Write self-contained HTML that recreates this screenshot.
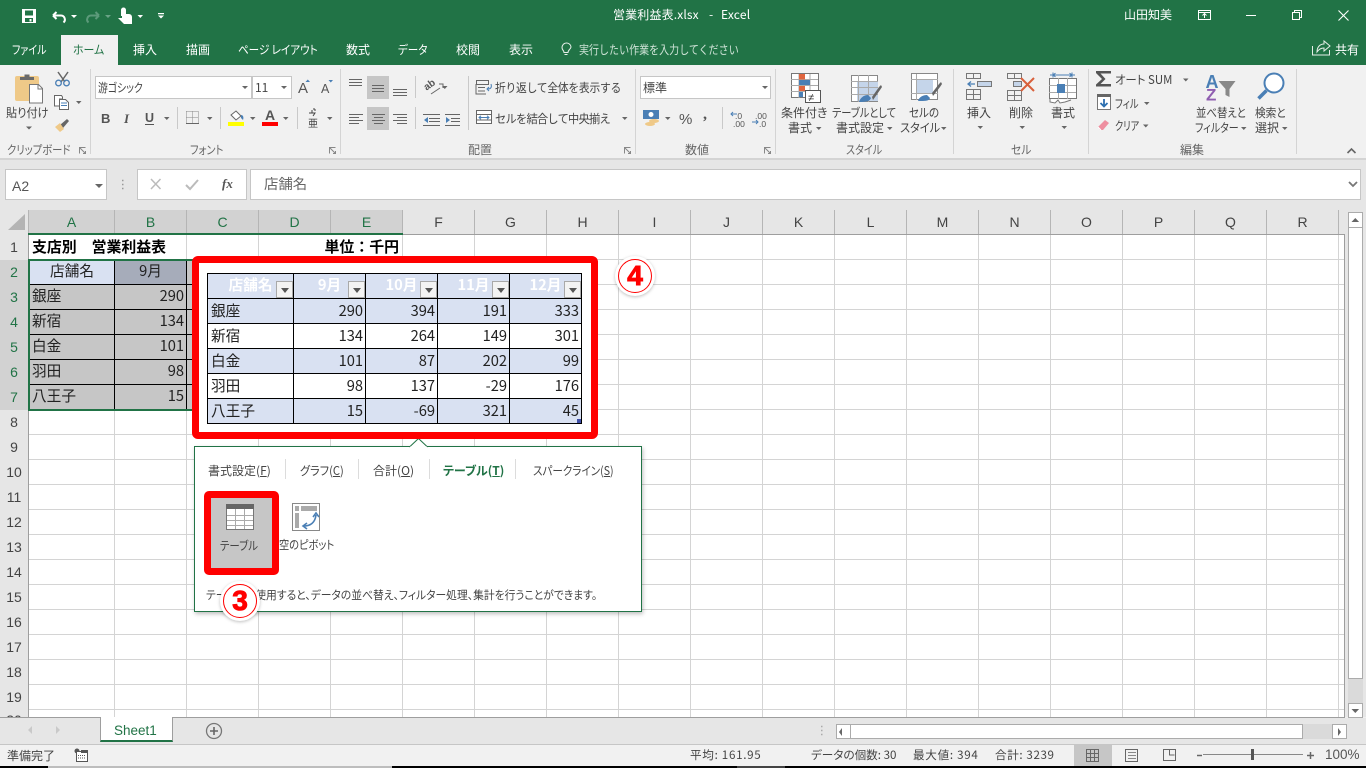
<!DOCTYPE html>
<html lang="ja"><head><meta charset="utf-8"><title>営業利益表.xlsx - Excel</title>
<style>
html,body{margin:0;padding:0;width:1366px;height:768px;overflow:hidden;background:#f1f1f1}
*{box-sizing:border-box}
body{position:relative;font-family:"Liberation Sans","Noto Sans CJK JP",sans-serif}
.a{position:absolute}
.t{position:absolute;white-space:nowrap;font:12px/16px "Noto Sans CJK JP",sans-serif;color:#444;font-feature-settings:"palt";transform-origin:0 50%}
.w{color:#fff}
.g{color:#666}
.c{position:absolute;white-space:nowrap;font:14.67px/24px "Noto Sans CJK JP",sans-serif;color:#222}
.h{position:absolute;text-align:center;font:14px/24px "Liberation Sans","Noto Sans CJK JP",sans-serif;color:#444}
.r{text-align:right}
.box{position:absolute;background:#fff;border:1px solid #c6c6c6}
table{position:absolute;border-collapse:collapse;table-layout:fixed;background:#fff}
td{border:1px solid #000;height:25px;padding:0 2px 0 3px;font:14.67px/22px "Noto Sans CJK JP",sans-serif;color:#222;overflow:hidden;white-space:nowrap;position:relative}
td.n{text-align:right}
tr.s td{background:#d9e1f2}
tr.hd td{background:#d9e1f2;color:#fff;font-weight:bold;text-align:center;padding:0 0 2px 0}
.f{position:absolute;right:0;bottom:0;width:17px;height:17px;background:#f3f3f3;border:1px solid #a9a9a9}
.f:after{content:"";position:absolute;left:4px;top:6px;border:4px solid transparent;border-top:5px solid #555;border-bottom:0}
u{text-underline-offset:1px}
</style></head><body>

<!-- title + tabs -->
<div class="a" style="left:0;top:0;width:1366px;height:65px;background:#217346"></div>
<div class="a" style="left:61px;top:35px;width:57px;height:30px;background:#f1f1f1"></div>
<div class="t w" style="left:613px;top:7px;letter-spacing:.15px">営業利益表.xlsx</div>
<div class="t w" style="left:709px;top:7px">-</div>
<div class="t w" style="left:721px;top:7px;letter-spacing:.2px">Excel</div>
<div class="t w" style="left:1124px;top:7px">山田知美</div>
<div class="t w" style="left:12px;top:42px;transform:scaleX(.83)">ファイル</div>
<div class="t" style="left:73px;top:42px;color:#217346;transform:scaleX(.91)">ホーム</div>
<div class="t w" style="left:133px;top:42px">挿入</div>
<div class="t w" style="left:186px;top:42px">描画</div>
<div class="t w" style="left:238px;top:42px;transform:scaleX(.88)">ページ レイアウト</div>
<div class="t w" style="left:346px;top:42px">数式</div>
<div class="t w" style="left:398px;top:42px;transform:scaleX(.88)">データ</div>
<div class="t w" style="left:456px;top:42px">校閲</div>
<div class="t w" style="left:509px;top:42px">表示</div>
<div class="t" style="left:579px;top:42px;color:#cfe3d7;font-feature-settings:normal;transform:scaleX(.835)">実行したい作業を入力してください</div>
<div class="t w" style="left:1335px;top:42px">共有</div>

<!-- ribbon -->
<div class="a" style="left:0;top:65px;width:1366px;height:93px;background:#f1f1f1"></div>
<div class="a" style="left:0;top:158px;width:1366px;height:2px;background:#d4d4d4"></div>
<div class="a" style="left:0;top:160px;width:1366px;height:50px;background:#e6e6e6"></div>

<div class="box" style="left:95px;top:76px;width:157px;height:23px"></div>
<div class="box" style="left:252px;top:76px;width:40px;height:23px"></div>
<div class="box" style="left:640px;top:76px;width:131px;height:23px"></div>
<div class="a" style="left:367px;top:76px;width:22px;height:23px;background:#c6c6c6"></div>
<div class="a" style="left:367px;top:107px;width:22px;height:23px;background:#c6c6c6"></div>

<div class="t" style="left:98px;top:80px;transform:scaleX(.82)">游ゴシック</div>
<div class="t" style="left:255px;top:80px">11</div>
<div class="t" style="left:643px;top:80px">標準</div>
<div class="t" style="left:6px;top:105px;transform:scaleX(.93)">貼り付け</div>
<div class="t" style="left:495px;top:80px;font-feature-settings:normal;letter-spacing:-.3px;transform:scaleX(.9)">折り返して全体を表示する</div>
<div class="t" style="left:495px;top:111px;font-feature-settings:normal;letter-spacing:-.8px;transform:scaleX(.936)">セルを結合して中央揃え</div>
<div class="t" style="left:781px;top:105px">条件付き</div>
<div class="t" style="left:788px;top:120px">書式</div>
<div class="t" style="left:832px;top:105px;transform:scaleX(.853)">テーブルとして</div>
<div class="t" style="left:836px;top:120px">書式設定</div>
<div class="t" style="left:909px;top:105px;transform:scaleX(.88)">セルの</div>
<div class="t" style="left:900px;top:120px;transform:scaleX(.93)">スタイル</div>
<div class="t" style="left:967px;top:105px">挿入</div>
<div class="t" style="left:1009px;top:105px">削除</div>
<div class="t" style="left:1051px;top:105px">書式</div>
<div class="t" style="left:1115px;top:72px;transform:scaleX(.95)">オート SUM</div>
<div class="t" style="left:1115px;top:96px;transform:scaleX(.78)">フィル</div>
<div class="t" style="left:1115px;top:118px;transform:scaleX(.76)">クリア</div>
<div class="t" style="left:1196px;top:105px;transform:scaleX(.864)">並べ替えと</div>
<div class="t" style="left:1195px;top:120px;transform:scaleX(.83)">フィルター</div>
<div class="t" style="left:1255px;top:105px;transform:scaleX(.89)">検索と</div>
<div class="t" style="left:1255px;top:120px">選択</div>
<div class="t g" style="left:7px;top:142px;transform:scaleX(.857)">クリップボード</div>
<div class="t g" style="left:190px;top:142px;transform:scaleX(.85)">フォント</div>
<div class="t g" style="left:468px;top:142px">配置</div>
<div class="t g" style="left:685px;top:142px">数値</div>
<div class="t g" style="left:846px;top:142px;transform:scaleX(.84)">スタイル</div>
<div class="t g" style="left:1011px;top:142px;transform:scaleX(.9)">セル</div>
<div class="t g" style="left:1180px;top:142px">編集</div>

<!-- formula bar -->
<div class="box" style="left:5px;top:169px;width:102px;height:31px"></div>
<div class="box" style="left:137px;top:169px;width:110px;height:31px"></div>
<div class="box" style="left:250px;top:169px;width:1111px;height:31px"></div>
<div class="t" style="left:12px;top:178px;font:14px/16px 'Liberation Sans',sans-serif;color:#555">A2</div>
<div class="t" style="left:264px;top:176px;font-size:14.4px;color:#666;font-feature-settings:normal">店舗名</div>
<div class="t" style="left:222px;top:176px;font:italic bold 13px/16px 'Liberation Serif',serif;color:#555">fx</div>

<!-- grid -->
<div class="a" style="left:0;top:210px;width:1366px;height:507px;background:#e6e6e6"></div>
<div class="a" style="left:29px;top:235px;width:85px;height:482px;background-color:#fff;background-image:linear-gradient(to bottom,#d4d4d4 1px,transparent 1px);background-size:100% 25px;background-position:0 24px"></div>
<div class="a" style="left:114px;top:235px;width:1230px;height:482px;background-color:#fff;background-image:linear-gradient(to right,#d4d4d4 1px,transparent 1px),linear-gradient(to bottom,#d4d4d4 1px,transparent 1px);background-size:72px 100%,100% 25px;background-position:0 0,0 24px"></div>
<div class="a" style="left:1344px;top:234px;width:1px;height:484px;background:#9e9e9e"></div>
<div class="a" style="left:0;top:717px;width:1345px;height:1px;background:#9e9e9e"></div>
<div class="a" style="left:28px;top:234px;width:1px;height:483px;background:#9e9e9e"></div>
<div class="a" style="left:29px;top:234px;width:1315px;height:1px;background:#9e9e9e"></div>

<!-- col headers -->
<div class="a" style="left:29px;top:210px;width:374px;height:24px;background:#d2d2d2"></div>
<div class="h" style="left:29px;top:210px;width:85px;color:#217346;">A</div>
<div class="h" style="left:115px;top:210px;width:71px;color:#217346;">B</div>
<div class="h" style="left:187px;top:210px;width:71px;color:#217346;">C</div>
<div class="h" style="left:259px;top:210px;width:71px;color:#217346;">D</div>
<div class="h" style="left:331px;top:210px;width:71px;color:#217346;">E</div>
<div class="h" style="left:403px;top:210px;width:71px">F</div>
<div class="h" style="left:475px;top:210px;width:71px">G</div>
<div class="h" style="left:547px;top:210px;width:71px">H</div>
<div class="h" style="left:619px;top:210px;width:71px">I</div>
<div class="h" style="left:691px;top:210px;width:71px">J</div>
<div class="h" style="left:763px;top:210px;width:71px">K</div>
<div class="h" style="left:835px;top:210px;width:71px">L</div>
<div class="h" style="left:907px;top:210px;width:71px">M</div>
<div class="h" style="left:979px;top:210px;width:71px">N</div>
<div class="h" style="left:1051px;top:210px;width:71px">O</div>
<div class="h" style="left:1123px;top:210px;width:71px">P</div>
<div class="h" style="left:1195px;top:210px;width:71px">Q</div>
<div class="h" style="left:1267px;top:210px;width:71px">R</div>
<div class="a" style="left:114px;top:210px;width:1225px;height:24px;background-image:linear-gradient(to right,#b5b5b5 1px,transparent 1px);background-size:72px 100%;background-position:0 0"></div>
<div class="a" style="left:28px;top:210px;width:1px;height:24px;background:#b5b5b5"></div>
<div class="a" style="left:28px;top:233px;width:375px;height:2px;background:#217346"></div>

<!-- row headers -->
<div class="a" style="left:0;top:260px;width:28px;height:150px;background:#d2d2d2"></div>
<div class="h" style="left:0;top:235px;width:28px">1</div>
<div class="h" style="left:0;top:260px;width:28px;color:#217346">2</div>
<div class="h" style="left:0;top:285px;width:28px;color:#217346">3</div>
<div class="h" style="left:0;top:310px;width:28px;color:#217346">4</div>
<div class="h" style="left:0;top:335px;width:28px;color:#217346">5</div>
<div class="h" style="left:0;top:360px;width:28px;color:#217346">6</div>
<div class="h" style="left:0;top:385px;width:28px;color:#217346">7</div>
<div class="h" style="left:0;top:410px;width:28px">8</div>
<div class="h" style="left:0;top:435px;width:28px">9</div>
<div class="h" style="left:0;top:460px;width:28px">10</div>
<div class="h" style="left:0;top:485px;width:28px">11</div>
<div class="h" style="left:0;top:510px;width:28px">12</div>
<div class="h" style="left:0;top:535px;width:28px">13</div>
<div class="h" style="left:0;top:560px;width:28px">14</div>
<div class="h" style="left:0;top:585px;width:28px">15</div>
<div class="h" style="left:0;top:610px;width:28px">16</div>
<div class="h" style="left:0;top:635px;width:28px">17</div>
<div class="h" style="left:0;top:660px;width:28px">18</div>
<div class="h" style="left:0;top:685px;width:28px">19</div>
<div class="a" style="left:0;top:709px;width:28px;height:8px;overflow:hidden"><div class="h" style="left:0;top:-1px;width:28px">20</div></div>

<!-- cells -->
<div class="a" style="left:30px;top:235px;width:150px;height:24px;background:#fff"></div>
<div class="a" style="left:260px;top:235px;width:142px;height:24px;background:#fff"></div>
<div class="c" style="left:32px;top:235px;font-weight:bold;color:#000;font-size:14.9px">支店別　営業利益表</div>
<div class="c r" style="left:260px;width:139px;top:235px;font-weight:bold;color:#000;font-size:14.9px">単位：千円</div>
<div class="a" style="left:29px;top:260px;width:163px;height:149px;background:#c6c6c6"></div>
<div class="a" style="left:30px;top:261px;width:84px;height:23px;background:#d9e1f2"></div>
<div class="a" style="left:115px;top:261px;width:71px;height:23px;background:#a6acba"></div>
<div class="a" style="left:30px;top:284px;width:162px;height:1px;background:#000"></div>
<div class="a" style="left:30px;top:309px;width:162px;height:1px;background:#000"></div>
<div class="a" style="left:30px;top:334px;width:162px;height:1px;background:#000"></div>
<div class="a" style="left:30px;top:359px;width:162px;height:1px;background:#000"></div>
<div class="a" style="left:30px;top:384px;width:162px;height:1px;background:#000"></div>
<div class="a" style="left:114px;top:261px;width:1px;height:148px;background:#000"></div>
<div class="a" style="left:186px;top:261px;width:1px;height:148px;background:#000"></div>
<div class="a" style="left:28px;top:259px;width:165px;height:2px;background:#217346"></div>
<div class="a" style="left:28px;top:409px;width:165px;height:2px;background:#217346"></div>
<div class="a" style="left:28px;top:259px;width:2px;height:152px;background:#217346"></div>
<div class="c" style="left:30px;width:84px;text-align:center;top:259px">店舗名</div>
<div class="c" style="left:115px;width:71px;text-align:center;top:259px">9月</div>
<div class="c" style="left:32px;top:284px">銀座</div><div class="c r" style="left:115px;width:69px;top:284px">290</div>
<div class="c" style="left:32px;top:309px">新宿</div><div class="c r" style="left:115px;width:69px;top:309px">134</div>
<div class="c" style="left:32px;top:334px">白金</div><div class="c r" style="left:115px;width:69px;top:334px">101</div>
<div class="c" style="left:32px;top:359px">羽田</div><div class="c r" style="left:115px;width:69px;top:359px">98</div>
<div class="c" style="left:32px;top:384px">八王子</div><div class="c r" style="left:115px;width:69px;top:384px">15</div>

<!-- quick analysis popup -->
<div class="a" style="left:194px;top:446px;width:448px;height:166px;background:#fff;border:1px solid #217346;box-shadow:1px 2px 4px rgba(0,0,0,.25)"></div>
<svg class="a" style="left:408px;top:436px" width="22" height="12"><path d="M1.500 11 L10.500 2.500 L19.500 11" fill="#fff" stroke="#217346"/><rect x="2" y="10.500" width="17" height="2" fill="#fff"/></svg>
<div class="t" style="left:208px;top:463px">書式設定(<u>F</u>)</div>
<div class="t" style="left:300px;top:463px;transform:scaleX(.93)">グラフ(<u>C</u>)</div>
<div class="t" style="left:373px;top:463px">合計(<u>O</u>)</div>
<div class="t" style="left:443px;top:463px;color:#217346;font-weight:bold">テーブル(<u>T</u>)</div>
<div class="t" style="left:533px;top:463px;transform:scaleX(.88)">スパークライン(<u>S</u>)</div>
<div class="a" style="left:285px;top:459px;width:1px;height:20px;background:#dcdcdc"></div>
<div class="a" style="left:358px;top:459px;width:1px;height:20px;background:#dcdcdc"></div>
<div class="a" style="left:429px;top:459px;width:1px;height:20px;background:#dcdcdc"></div>
<div class="a" style="left:515px;top:459px;width:1px;height:20px;background:#dcdcdc"></div>
<div class="a" style="left:204px;top:491px;width:75px;height:84px;background:#c6c6c6;border:7px solid #f00;border-radius:5px"></div>
<svg class="a" style="left:226px;top:504px" width="30" height="27"><rect x=".5" y=".5" width="27" height="25" fill="#fff" stroke="#777"/><rect x="0" y="0" width="28" height="5" fill="#666"/><path d="M1 11.500H27M1 16.500H27M1 21.500H27M9.500 5V25M18.500 5V25" stroke="#aaa" fill="none"/></svg>
<svg class="a" style="left:292px;top:503px" width="30" height="29"><rect x=".5" y=".5" width="27" height="27" fill="#fff" stroke="#888"/><rect x="9" y="3" width="16" height="5" fill="#aaa"/><rect x="3" y="3" width="4" height="5" fill="#aaa"/><rect x="3" y="10" width="4" height="15" fill="#aaa"/><path d="M12 23c6 0 11-3 12-11M21 14l3-4 3 4M15 20l-4 3 4 3" fill="none" stroke="#4a7fb5" stroke-width="1.600"/></svg>
<div class="t" style="left:220px;top:538px;transform:scaleX(.87)">テーブル</div>
<div class="t" style="left:279px;top:537px;transform:scaleX(.85)">空のピボット</div>
<div class="t" style="left:206px;top:587px;font-size:11.6px;transform:scaleX(.93)">テーブルを使用すると、データの並べ替え、フィルター処理、集計を行うことができます。</div>

<!-- red preview box -->
<div class="a" style="left:192px;top:256px;width:406px;height:183px;background:#fff;border:7px solid #f00;border-radius:6px"></div>
<table style="left:207px;top:273px;width:375px">
<colgroup><col style="width:86px"><col style="width:72px"><col style="width:72px"><col style="width:72px"><col style="width:72px"></colgroup>
<tr class="hd"><td>店舗名<span class="f"></span></td><td>9月<span class="f"></span></td><td>10月<span class="f"></span></td><td>11月<span class="f"></span></td><td>12月<span class="f"></span></td></tr>
<tr class="s"><td>銀座</td><td class="n">290</td><td class="n">394</td><td class="n">191</td><td class="n">333</td></tr>
<tr><td>新宿</td><td class="n">134</td><td class="n">264</td><td class="n">149</td><td class="n">301</td></tr>
<tr class="s"><td>白金</td><td class="n">101</td><td class="n">87</td><td class="n">202</td><td class="n">99</td></tr>
<tr><td>羽田</td><td class="n">98</td><td class="n">137</td><td class="n">-29</td><td class="n">176</td></tr>
<tr class="s"><td>八王子</td><td class="n">15</td><td class="n">-69</td><td class="n">321</td><td class="n">45</td></tr>
</table>
<div class="a" style="left:577px;top:419px;width:4px;height:4px;background:#3f4fa8"></div>

<!-- numbered badges -->
<div class="a" style="left:615px;top:256px;width:40px;height:40px;border-radius:50%;background:#fff;box-shadow:0 1px 3px rgba(0,0,0,.25)"></div>
<div class="a" style="left:618px;top:259px;width:34px;height:34px;border-radius:50%;border:1.500px solid #f00;color:#f00;font:900 28px/31px 'Liberation Sans',sans-serif;text-align:center;-webkit-text-stroke:1px #f00">4</div>
<div class="a" style="left:220px;top:581px;width:40px;height:40px;border-radius:50%;background:#fff;box-shadow:0 1px 3px rgba(0,0,0,.25)"></div>
<div class="a" style="left:223px;top:584px;width:34px;height:34px;border-radius:50%;border:1.500px solid #f00;color:#f00;font:900 28px/31px 'Liberation Sans',sans-serif;text-align:center;-webkit-text-stroke:1px #f00">3</div>

<!-- scrollbars -->
<div class="a" style="left:1348px;top:212px;width:15px;height:505px;background:#dadada"></div>
<div class="a" style="left:1348px;top:212px;width:15px;height:467px;background:#fff;border:1px solid #ababab"></div>
<div class="a" style="left:1348px;top:212px;width:15px;height:16px;background:#fff;border:1px solid #ababab"></div>
<div class="a" style="left:1348px;top:703px;width:15px;height:15px;background:#fff;border:1px solid #ababab"></div>

<!-- tab bar -->
<div class="a" style="left:0;top:718px;width:1366px;height:27px;background:#e6e6e6"></div>
<div class="a" style="left:0;top:744px;width:1366px;height:1px;background:#c6c6c6"></div>
<div class="a" style="left:100px;top:717px;width:73px;height:25px;background:#fff;border-left:1px solid #9e9e9e;border-right:1px solid #9e9e9e;border-bottom:2px solid #217346"></div>
<div class="t" style="left:114px;top:723px;font:13.5px/16px 'Liberation Sans',sans-serif;color:#217346">Sheet1</div>
<div class="a" style="left:836px;top:724px;width:496px;height:15px;background:#dadada"></div>
<div class="a" style="left:836px;top:724px;width:467px;height:15px;background:#fff;border:1px solid #ababab"></div>
<div class="a" style="left:836px;top:724px;width:15px;height:15px;background:#fff;border:1px solid #ababab"></div>
<div class="a" style="left:1332px;top:724px;width:15px;height:15px;background:#fff;border:1px solid #ababab"></div>

<!-- status -->
<div class="a" style="left:0;top:745px;width:1366px;height:21px;background:#f1f1f1"></div>
<div class="a" style="left:1074px;top:745px;width:38px;height:21px;background:#c6c6c6"></div>
<div class="t" style="left:7px;top:748px;font-size:12px">準備完了</div>
<div class="t" style="left:690px;top:747px;font-size:11.6px;letter-spacing:.7px">平均: 161.95</div>
<div class="t" style="left:811px;top:747px;font-size:11.6px">データの個数: 30</div>
<div class="t" style="left:913px;top:747px;font-size:11.6px;letter-spacing:.7px">最大値: 394</div>
<div class="t" style="left:995px;top:747px;font-size:11.6px;letter-spacing:.6px">合計: 3239</div>
<div class="t" style="left:1325px;top:747px;font:13.500px/16px 'Liberation Sans',sans-serif;color:#555">100%</div>
<div class="a" style="left:0;top:766px;width:1366px;height:2px;background:#000"></div>
<div class="a" style="left:48px;top:766px;width:344px;height:2px;background:#bdbdbd"></div>
<div class="a" style="left:737px;top:766px;width:48px;height:2px;background:#444"></div>

<!-- icons -->
<svg class="a" style="left:0;top:0;pointer-events:none" width="1366" height="768" viewBox="0 0 1366 768">
<!-- QAT -->
<path fill="#fff" fill-rule="evenodd" d="M22 9h14v14H22zM25 10.500v5h8v-5zM25 18v4h8v-4zM29.500 19h2v2.500h-2z"/>
<path d="M53 15.500 56.500 12M53 15.500 56.500 19M53 15.500H61a4 4 0 0 1 2.500 7" fill="none" stroke="#fff" stroke-width="2"/>
<path d="M71 15h6l-3 3z M137.500 15h5.500l-2.700 3z" fill="#fff"/>
<path d="M105 15h6l-3 3z" fill="#6aa386"/>
<path d="M99 15.500 95.500 12M99 15.500 95.500 19M99 15.500H91a4 4 0 0 0-2.500 7" fill="none" stroke="#5c9a7a" stroke-width="2"/>
<path fill="#fff" d="M121 10a2.500 2.500 0 0 1 5 0v4h3a3 3 0 0 1 3 3v7h-8l-3-3-3-3h4v-2h-1z"/>
<path d="M158 13h6v1.200h-6zM158 15.500h6l-3 3z" fill="#fff"/>
<!-- window controls -->
<g fill="none" stroke="#fff"><rect x="1198.500" y="10.500" width="12" height="9"/><path d="M1198 12.500h13M1204.500 18v-4M1202.500 15.500l2-2 2 2"/><path d="M1246 15.500h10"/><rect x="1292.500" y="12.500" width="7" height="7"/><path d="M1294.500 12.500v-2h7v7h-2"/><path d="M1338.500 10.500 1348.500 20.500M1348.500 10.500 1338.500 20.500" stroke-width="1.100"/></g>
<!-- bulb + share -->
<path d="M571 47a4.500 4.500 0 1 0-8.500 2.500c1 1.200 1.500 2 1.500 3h4c0-1 .5-1.800 1.500-3a4.500 4.500 0 0 0 1.500-2.500zM564.500 54.500h3" fill="none" stroke="#e6efe9" stroke-width="1"/>
<path d="M1312.500 46v9h17v-5M1317 52c0-5 3-8 7-8v-3l6 5-6 5v-3c-3 0-5 1-7 4z" fill="none" stroke="#e6efe9"/>
<!-- ribbon separators -->
<path d="M90.500 69v85M340.500 69v85M635.500 69v85M775.500 69v85M953.500 69v85M1088.500 69v85M1296.500 69v85" stroke="#d4d4d4"/>
<path d="M177.500 107v22M220.500 107v22M297.500 107v22M415.500 76v22M415.500 107v22M468.500 76v54M722.500 107v22" stroke="#c9c9c9"/>
<!-- clipboard -->
<rect x="15" y="76" width="24" height="25" rx="2" fill="#efc988"/>
<path d="M20 80v-3h4.500v-2.500h5V77H34v3z" fill="#6a6a6a"/>
<path d="M29.500 84.500h9l4 4v14.500h-13z" fill="#fff" stroke="#777"/><path d="M38 85v4h4" fill="none" stroke="#777"/>
<!-- scissors -->
<g fill="none"><path d="M58 72l7 10M68 72l-7 10" stroke="#666" stroke-width="1.500"/><circle cx="58.500" cy="83" r="2.800" stroke="#4a7fb5" stroke-width="1.300"/><circle cx="66.500" cy="83" r="2.800" stroke="#4a7fb5" stroke-width="1.300"/></g>
<!-- copy -->
<path d="M54.500 95.500h7l1 1.500v2h-3v7h-5z M59.500 99.500h6l3 3v7h-9z" fill="#fff" stroke="#666"/><path d="M61 103h6M61 105.500h6" stroke="#4a7fb5"/>
<!-- brush -->
<path d="M60 125l7-6 2 2-6 7z" fill="#666"/><path d="M55 127l5-4 4 6-4 3z" fill="#efc988"/>
<!-- small arrows -->
<g fill="#666">
<path d="M26 126.500h6l-3 3zM76 101h5.500l-2.700 3zM242 86h6l-3 3zM281 86h6l-3 3zM164 117h5.500l-2.700 3zM207 117h5.500l-2.700 3zM250 117h5.500l-2.700 3zM283 117h5.500l-2.700 3zM327 117h5.500l-2.700 3zM442 86h5.500l-2.700 3zM622 117h5.500l-2.700 3zM762 86h6l-3 3zM665 117h5.500l-2.700 3zM816 127h5.500l-2.700 3zM887 127h5.500l-2.700 3zM941 127h5.500l-2.700 3zM977.500 126h5.500l-2.700 3zM1019.500 126h5.500l-2.700 3zM1061.500 126h5.500l-2.700 3zM1183 78.500h5.500l-2.700 3zM1144 102h5.500l-2.700 3zM1143 124.500h5.500l-2.700 3zM1241 127h5.500l-2.700 3zM1282 127h5.500l-2.700 3zM95 184h8l-4 4z"/>
</g>
<!-- grow/shrink -->
<text x="298" y="93" font-family="Liberation Sans,sans-serif" font-size="15" fill="#555">A</text>
<text x="321" y="93" font-family="Liberation Sans,sans-serif" font-size="12.500" fill="#555">A</text>
<path d="M305.500 82h4.500l-2.200-2.500zM328.500 80h4.500l-2.200 2.500z" fill="#4a7fb5"/>
<!-- B I U -->
<text x="101" y="123" font-family="Liberation Sans,sans-serif" font-size="13" font-weight="bold" fill="#555">B</text>
<text x="124" y="123" font-family="Liberation Serif,serif" font-size="13" font-style="italic" font-weight="bold" fill="#555">I</text>
<text x="145" y="122" font-family="Liberation Sans,sans-serif" font-size="12.500" font-weight="bold" fill="#555">U</text>
<path d="M145 124.500h9" stroke="#555"/>
<!-- borders -->
<path d="M186.500 111.500h12v12M186.500 111.500v12M192.500 111.500v12M186.500 117.500h12" fill="none" stroke="#888" stroke-dasharray="1 1"/><path d="M186 123.500h13" stroke="#666"/>
<!-- fill -->
<path d="M231 115l5-4 5 5-5 4z" fill="#fff" stroke="#666"/><path d="M241 115c2 0 3 2 2 5l-2-2z" fill="#4a7fb5"/><rect x="228" y="122" width="16" height="4" fill="#ff0"/>
<!-- font color -->
<text x="265" y="120" font-family="Liberation Sans,sans-serif" font-size="14" font-weight="bold" fill="#555">A</text><rect x="262" y="122" width="16" height="4" fill="#f00"/>
<!-- phonetic -->
<text x="308" y="127" font-family="Noto Sans CJK JP,sans-serif" font-size="10" fill="#444">亜</text><path d="M309 113h6l-2 3M312 110v3" fill="none" stroke="#444"/><path d="M315 109l-2 0M315 109v2" stroke="#444" fill="none"/>
<!-- align -->
<path d="M349 79.500h13M349 82.500h13M349 85.500h13M372 85.500h12M372 88.500h12M372 91.500h12M393 89.500h14M393 92.500h14M393 95.500h14" stroke="#666"/>
<path d="M349 114.500h14M349 117.500h10M349 120.500h14M349 123.500h10M372 114.500h13M374 117.500h9M372 120.500h13M374 123.500h9M393 114.500h14M397 117.500h10M393 120.500h14M397 123.500h10" stroke="#666"/>
<path d="M423 114.500h17M429 118.500h11M429 121.500h11M423 125.500h17M445 114.500h15M451 118.500h9M451 121.500h9M445 125.500h15" stroke="#666"/>
<path d="M428 117l-4 3 4 3zM446 117l4 3-4 3z" fill="#4a7fb5"/>
<text x="424" y="89" font-family="Liberation Sans,sans-serif" font-size="10" font-weight="bold" fill="#555" transform="rotate(-35 428 86)">ab</text><path d="M431 94l9-6M439 84h4v4" stroke="#666" fill="none"/>
<!-- wrap, merge -->
<rect x="476.500" y="80.500" width="12" height="4" fill="none" stroke="#666"/><path d="M476 84v10h10M478 87.500h7M478 91h7" fill="none" stroke="#666"/><path d="M491 84c1 3 0 5-3 5M489 87l-2 2 2 2" fill="none" stroke="#4a7fb5"/>
<rect x="476.500" y="110.500" width="15" height="13" fill="#fff" stroke="#666"/><path d="M476 114.500h16M476 120h16" stroke="#666"/><path d="M479 117.500h10M481 115.700l-2 1.800 2 1.800M487 115.700l2 1.800-2 1.800" fill="none" stroke="#4a7fb5"/>
<!-- number -->
<rect x="643" y="110" width="16" height="9" fill="#4a7fb5"/><circle cx="651" cy="114.500" r="2.500" fill="#fff"/><ellipse cx="654" cy="121" rx="5" ry="2" fill="#efc988"/><ellipse cx="650" cy="124" rx="5" ry="2" fill="#efc988"/>
<text x="679" y="124" font-family="Liberation Sans,sans-serif" font-size="15" fill="#555">%</text>
<text x="703" y="119" font-family="Liberation Serif,serif" font-size="16" font-weight="bold" fill="#555">,</text>
<text x="735" y="119" font-family="Liberation Sans,sans-serif" font-size="8.500" fill="#555">.0</text><text x="733" y="127" font-family="Liberation Sans,sans-serif" font-size="8.500" fill="#555">.00</text>
<text x="755" y="119" font-family="Liberation Sans,sans-serif" font-size="8.500" fill="#555">.00</text><text x="759" y="127" font-family="Liberation Sans,sans-serif" font-size="8.500" fill="#555">.0</text>
<path d="M737 114h-6M733 112l-2 2 2 2M752 122h6M756 120l2 2-2 2" fill="none" stroke="#4a7fb5"/>
<!-- conditional formatting -->
<rect x="791.500" y="73.500" width="27" height="24" fill="#fff" stroke="#777"/><path d="M791 79.500h27M791 85.500h27M791 91.500h27M799 74v24M810 74v24" stroke="#aaa"/><rect x="799" y="74" width="6" height="5.500" fill="#e0653f"/><rect x="799" y="80" width="11" height="5" fill="#4a7fb5"/><rect x="799" y="86" width="6" height="5" fill="#e0653f"/><rect x="799" y="92" width="4" height="5" fill="#4a7fb5"/><rect x="805.500" y="90.500" width="15" height="12" fill="#fff" stroke="#555"/><text x="808" y="101" font-family="Liberation Sans,sans-serif" font-size="11" fill="#333">≠</text>
<!-- table format -->
<rect x="851.500" y="75.500" width="26" height="26" fill="#fff" stroke="#888"/><rect x="857" y="81" width="21" height="20" fill="#c5d5ea"/><path d="M851 81.500h27M851 87.500h27M851 94.500h27M858.500 75v27M868.500 75v27" stroke="#aaa"/><path d="M872 97l7-10 2-2 1 2-2 3-7 10z" fill="#666"/><path d="M859 102c1-4 5-7 9-7l3 3c-1 3-4 4-12 4z" fill="#4a7fb5"/>
<!-- cell style -->
<rect x="911.500" y="73.500" width="26" height="26" fill="#fff" stroke="#888"/><rect x="916" y="79" width="17" height="15" fill="#c5d5ea"/><path d="M911 79.500h27M911 93.500h27M916.500 74v26" stroke="#aaa"/><path d="M932 93l7-9 2-2 1 2-2 3-7 9z" fill="#666"/><path d="M918 101c1-4 5-6 9-6l3 3c-1 3-4 3-12 3z" fill="#4a7fb5"/>
<!-- insert -->
<g fill="none" stroke="#777"><path d="M966.500 73.500h14v5h-14zM973.500 73.500v5"/><path d="M977.500 81.500h14v5h-14zM984.500 81.500v5"/><path d="M966.500 89.500h14v10h-14zM966.500 94.500h14M973.500 89.500v10"/></g><rect x="978" y="82" width="13" height="4" fill="#c5d5ea"/><path d="M975 84h-7M971 81.500l-3 2.500 3 2.500" fill="none" stroke="#4a7fb5" stroke-width="1.300"/>
<!-- delete -->
<g fill="none" stroke="#777"><path d="M1007.500 73.500h14v5h-14zM1014.500 73.500v5"/><path d="M1007.500 90.500h14v10h-14zM1007.500 95.500h14M1014.500 90.500v10"/><path d="M1013.500 81.500h8v5h-8z" fill="#c5d5ea"/></g><path d="M1021 78l13 13M1034 78l-13 13" stroke="#d9603b" stroke-width="2"/>
<!-- format -->
<rect x="1049.500" y="78.500" width="27" height="20" fill="#fff" stroke="#777"/><path d="M1049 85.500h27M1049 92.500h27M1058.500 78v21M1067.500 78v21" stroke="#aaa"/><rect x="1057" y="84" width="8" height="9" fill="#4a7fb5"/><path d="M1050 75h25M1053 72.500v5M1072 72.500v5M1053 75l2.500-1.800M1053 75l2.500 1.800M1072 75l-2.500-1.800M1072 75l-2.500 1.800" stroke="#4a7fb5" fill="none"/><path d="M1050 99v3l5 1 3-3 2 3 5-1 6-2" stroke="#777" fill="#fff"/>
<!-- sigma -->
<path d="M1096 71h15v2.500h-10.500l5 5.500-5 5h10.500v2.500h-15v-2l6-5.500-6-6z" fill="#555"/>
<!-- fill -->
<rect x="1097.500" y="94.500" width="13" height="15" fill="#fff" stroke="#777"/><rect x="1097" y="94" width="14" height="3" fill="#666"/><path d="M1104 99v7M1100.500 103l3.500 3.500 3.500-3.500" stroke="#2d6fb0" stroke-width="1.800" fill="none"/>
<!-- eraser -->
<path d="M1098 127l7-7 4 3-6 7h-3z" fill="#ee8fa0"/><path d="M1098 127l3 3" stroke="#fff"/>
<!-- sort -->
<text x="1205.500" y="88" font-family="Liberation Sans,sans-serif" font-size="18" font-weight="bold" fill="#4a7fb5">A</text><text x="1206" y="100.500" font-family="Liberation Sans,sans-serif" font-size="17" font-weight="bold" fill="#8f5db0">Z</text>
<path d="M1218.500 81h17l-6 8v8l-4-2v-6z" fill="#888"/>
<!-- search -->
<circle cx="1274" cy="83" r="9.500" fill="#fff" stroke="#4a7fb5" stroke-width="2"/><path d="M1266.500 90.500l-8 8" stroke="#4a7fb5" stroke-width="3.500"/>
<!-- collapse -->
<path d="M1347.500 153l4-4 4 4" fill="none" stroke="#666" stroke-width="1.600"/>
<!-- dialog launchers -->
<g fill="none" stroke="#888"><path d="M79.500 153.500v-6h6M80 148l5 5M83 153.500h2.500v-2.500"/><path d="M329.500 153.500v-6h6M330 148l5 5M333 153.500h2.500v-2.500"/><path d="M624.500 153.500v-6h6M625 148l5 5M628 153.500h2.500v-2.500"/><path d="M764.500 153.500v-6h6M765 148l5 5M768 153.500h2.500v-2.500"/></g>
<!-- formula bar -->
<path d="M122 180.500h1.500M122 184.500h1.500M122 188.500h1.500" stroke="#999" stroke-width="1.500"/>
<path d="M151 179l9.500 10M160.500 179l-9.500 10" stroke="#bbb" stroke-width="1.500"/>
<path d="M186 185l4 4 8-9" fill="none" stroke="#bbb" stroke-width="2"/>
<path d="M1349 182l4 4 4-4" fill="none" stroke="#777" stroke-width="1.800"/>
<!-- corner -->
<path d="M25 214v16H8z" fill="#b4b4b4"/>
<!-- scroll arrows -->
<path d="M1351.500 222l3.800-4 3.800 4zM1351.500 709l3.800 4 3.800-4zM1338 728v8l3-4zM842 728v8l-3-4z" fill="#666"/>
<!-- tab nav -->
<path d="M32 726v8l-4-4zM56 726v8l4-4z" fill="#c9c9c9"/>
<circle cx="214" cy="731" r="7.500" fill="none" stroke="#777" stroke-width="1.300"/><path d="M210 731h8M214 727v8" stroke="#666" stroke-width="1.600"/>
<path d="M821 726.500h1.500M821 730.500h1.500M821 734.500h1.500" stroke="#aaa" stroke-width="1.500"/>
<!-- status -->
<circle cx="77" cy="751" r="2.500" fill="#555"/><rect x="76.500" y="751.500" width="11" height="10" fill="#fff" stroke="#555"/><rect x="81" y="750" width="7" height="3" fill="#555"/><path d="M78 755.500h8M78 758h8" stroke="#555" stroke-dasharray="1 1"/>
<g fill="none" stroke="#666"><rect x="1086.500" y="749.500" width="12" height="12"/><path d="M1086 753.500h13M1086 757.500h13M1090.500 749v13M1094.500 749v13"/><rect x="1125.500" y="749.500" width="12" height="12"/><path d="M1128 752.500h8M1128 755.500h8M1128 758.500h8" stroke="#888"/><rect x="1163.500" y="749.500" width="12" height="11"/><path d="M1169.500 749v6h5"/></g>
<path d="M1197 755.500h5M1307 755.500h7M1310.500 752v7" stroke="#666" stroke-width="1.500"/>
<path d="M1203 754.500h100" stroke="#888"/><rect x="1251" y="749" width="3" height="11" fill="#555"/>
</svg>
</body></html>
